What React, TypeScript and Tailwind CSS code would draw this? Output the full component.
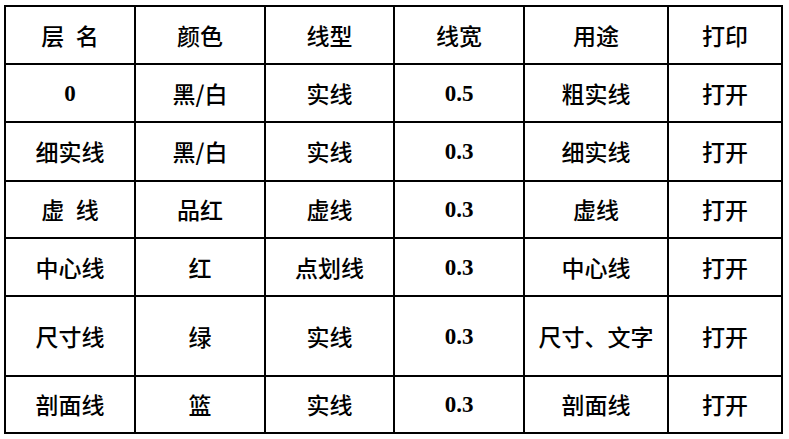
const header = ['层\u2002名', '颜色', '线型', '线宽', '用途', '打印'];

const rows = [
  { h: 'h-[56px]', cells: ['0', '黑/白', '实线', '0.5', '粗实线', '打开'] },
  { h: 'h-[57px]', cells: ['细实线', '黑/白', '实线', '0.3', '细实线', '打开'] },
  { h: 'h-[55px]', cells: ['虚\u2002线', '品红', '虚线', '0.3', '虚线', '打开'] },
  { h: 'h-[56px]', cells: ['中心线', '红', '点划线', '0.3', '中心线', '打开'] },
  { h: 'h-[78px]', cells: ['尺寸线', '绿', '实线', '0.3', '尺寸、文字', '打开'] },
  { h: 'h-[55px]', cells: ['剖面线', '篮', '实线', '0.3', '剖面线', '打开'] },
];

const cjk = "font-['Noto_Sans_CJK_SC',sans-serif] font-medium text-[23px]";
const num = "font-['Liberation_Serif','Times_New_Roman',serif] font-bold text-[23px]";

const Cell = ({ text, h }: { text: string; h: string }) => {
  const isNum = /^[0-9.]+$/.test(text);
  return (
    <div className={`${h} bg-white flex items-center justify-center text-black leading-none whitespace-pre ${isNum ? num : cjk}`}>
      {text}
    </div>
  );
};

export default function App() {
  return (
    <div className="w-[789px] h-[439px] bg-white pl-[4px] pt-[5px]">
      <div className="inline-grid grid-cols-[128px_128px_127px_128px_142px_112px] gap-[2px] bg-black p-[2px]">
        {header.map((t, i) => (
          <Cell key={'h' + i} text={t} h="h-[56px]" />
        ))}
        {rows.map((r, ri) =>
          r.cells.map((t, ci) => <Cell key={ri + '-' + ci} text={t} h={r.h} />)
        )}
      </div>
    </div>
  );
}
